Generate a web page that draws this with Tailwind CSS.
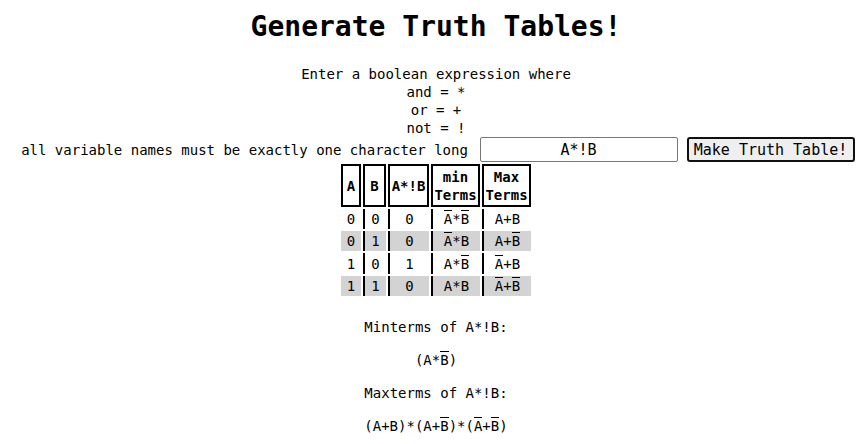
<!DOCTYPE html>
<html lang="en">
<head>
<meta charset="utf-8">
<title>Generate Truth Tables!</title>
<script src="https://cdn.jsdelivr.net/npm/@tailwindcss/browser@4"></script>
</head>
<body class="bg-white pt-[9px] pl-[5px] text-center font-['DejaVu_Sans_Mono',monospace] text-[14px] leading-[18px] text-black">
<h1 class="text-[28px] leading-9 font-bold">Generate Truth Tables!</h1>
<main class="mt-5">
  <p>Enter a boolean expression where<br>and = *<br>or = +<br>not = !</p>
  <form class="flex items-center justify-center" onsubmit="return false">
    <label for="expr" class="w-[462px] shrink-0 pr-2 whitespace-nowrap">all variable names must be exactly one character long</label>
    <input id="expr" type="text" value="A*!B" class="h-[25px] w-[198px] rounded-xs border border-[#767676] bg-white text-center text-[15px]">
    <button type="submit" class="ml-[9px] h-[25px] w-[168px] shrink-0 rounded-[3px] border-2 border-[#101010] bg-[#efefef] text-[15px] leading-5 whitespace-nowrap">Make Truth Table!</button>
  </form>
  <table class="mx-auto w-[194px] table-fixed border-separate border-spacing-[2px]">
    <colgroup><col class="w-5"><col class="w-[23px]"><col class="w-[41px]"><col class="w-[49px]"><col class="w-[49px]"></colgroup>
    <thead>
      <tr class="h-[43px] [&>th]:border-2 [&>th]:border-black [&>th]:p-0">
        <th scope="col">A</th><th scope="col">B</th><th scope="col">A*!B</th><th scope="col">min<br>Terms</th><th scope="col">Max<br>Terms</th>
      </tr>
    </thead>
    <tbody class="[&_td]:h-5 [&_td]:p-px [&_td+td]:border-l-2 [&_td+td]:border-black [&_span]:inline-block [&_span]:border-t [&_span]:border-black [&_span]:leading-[17px]">
      <tr><td>0</td><td>0</td><td>0</td><td><span>A</span>*<span>B</span></td><td>A+B</td></tr>
      <tr class="[&>td]:bg-[#d3d3d3]"><td>0</td><td>1</td><td>0</td><td><span>A</span>*B</td><td>A+<span>B</span></td></tr>
      <tr class="h-[21px]"><td>1</td><td>0</td><td>1</td><td>A*<span>B</span></td><td><span>A</span>+B</td></tr>
      <tr class="[&>td]:bg-[#d3d3d3]"><td>1</td><td>1</td><td>0</td><td>A*B</td><td><span>A</span>+<span>B</span></td></tr>
    </tbody>
  </table>
  <section class="mt-5 flex flex-col gap-[15px] [&_span]:inline-block [&_span]:border-t [&_span]:border-black [&_span]:leading-[17px]">
    <p>Minterms of A*!B:</p>
    <p>(A*<span>B</span>)</p>
    <p>Maxterms of A*!B:</p>
    <p>(A+B)*(A+<span>B</span>)*(<span>A</span>+<span>B</span>)</p>
  </section>
</main>
</body>
</html>
